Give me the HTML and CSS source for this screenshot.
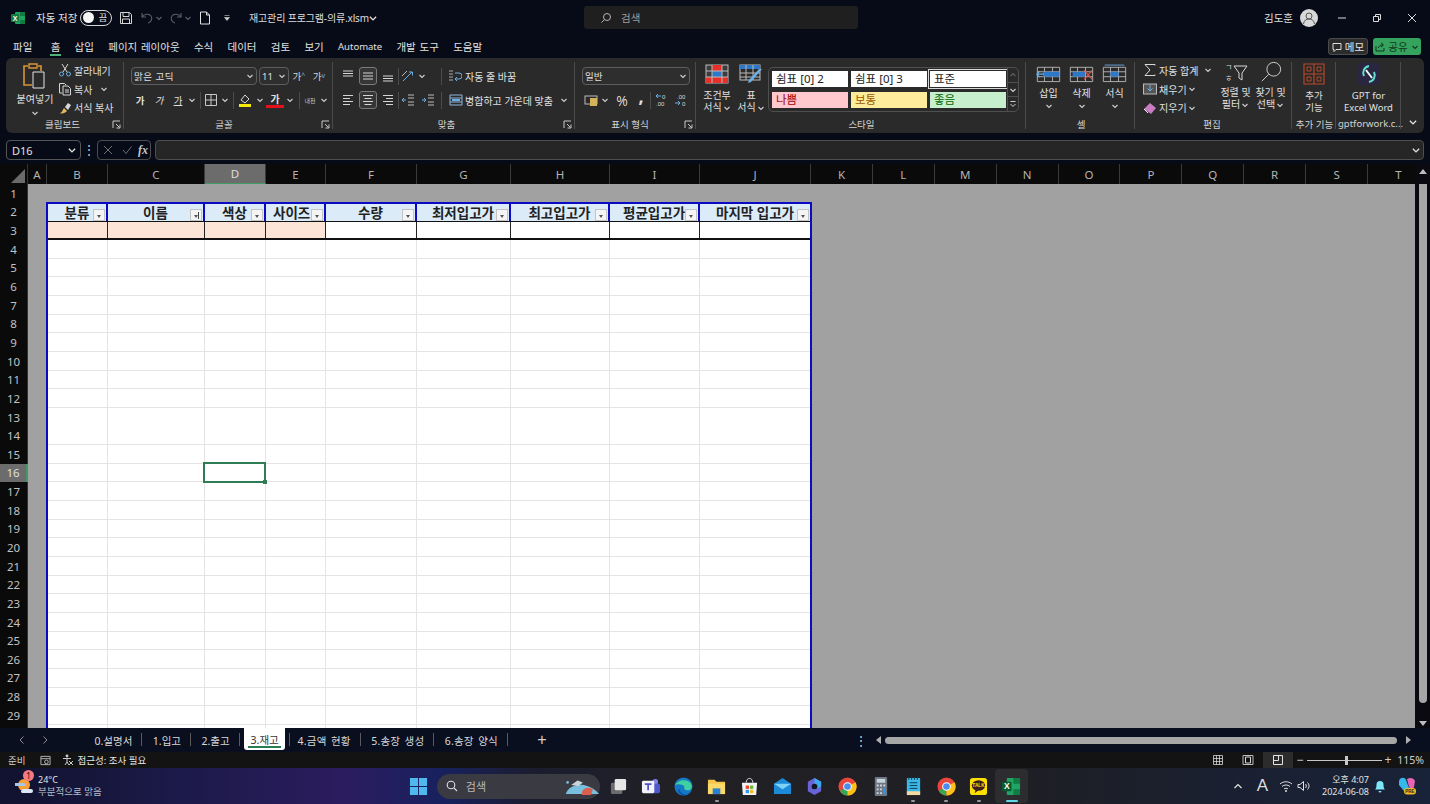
FILE: index.html
```html
<!DOCTYPE html>
<html lang="ko">
<head>
<meta charset="utf-8">
<title>재고관리 프로그램-의류.xlsm</title>
<link rel="stylesheet" href="styles.css">
</head>
<body>
<svg class="defs" aria-hidden="true">
  <symbol id="chev" viewBox="0 0 8 8"><path d="M1.500 3 4 5.500 6.500 3" fill="none" stroke="currentColor" stroke-width="1.100"/></symbol>
  <symbol id="launch" viewBox="0 0 9 9"><path d="M1 8V1h7M4 4l3.500 3.500M8 4.500V8H4.500" fill="none" stroke="#c8c8c8" stroke-width="1"/></symbol>
  <symbol id="atop" viewBox="0 0 16 16"><path d="M3 3h10M3 5.500h10M3 8h10" stroke="currentColor" fill="none"/></symbol>
  <symbol id="amid" viewBox="0 0 16 16"><path d="M3 5h10M3 8h10M3 11h10" stroke="currentColor" fill="none"/></symbol>
  <symbol id="abot" viewBox="0 0 16 16"><path d="M3 8h10M3 10.500h10M3 13h10" stroke="currentColor" fill="none"/></symbol>
  <symbol id="aleft" viewBox="0 0 16 16"><path d="M3 3.500h10M3 6.500h7M3 9.500h10M3 12.500h7" stroke="currentColor" fill="none"/></symbol>
  <symbol id="acen" viewBox="0 0 16 16"><path d="M3 3.500h10M4.500 6.500h7M3 9.500h10M4.500 12.500h7" stroke="currentColor" fill="none"/></symbol>
  <symbol id="aright" viewBox="0 0 16 16"><path d="M3 3.500h10M6 6.500h7M3 9.500h10M6 12.500h7" stroke="currentColor" fill="none"/></symbol>
  <symbol id="sgrid" viewBox="0 0 28 22"><path d="M1.500 3.500h25v16h-25zM1.500 8.500h25M1.500 14h25M9.500 3.500v16M18.500 3.500v16" fill="none" stroke="#b9b9b9"/></symbol>
  <symbol id="chrome" viewBox="0 0 20 20"><circle cx="10" cy="10" r="9.500" fill="#e8453c"/><path d="M10 10 2 14.500A9.500 9.500 0 0 0 10 19.500z" fill="#34a853"/><path d="M10 10 18.500 5.500A9.500 9.500 0 0 1 10 19.500z" fill="#fbc116"/><circle cx="10" cy="10" r="4.600" fill="#fff"/><circle cx="10" cy="10" r="3.500" fill="#4a8cf0"/></symbol>
</svg>

<header class="titlebar">
  <svg class="xl" viewBox="0 0 14 14"><rect x="4" y="1" width="10" height="12" rx="1" fill="#21a366"/><path d="M9 1h5v4H9zM9 9h5v4H9z" fill="#107c41"/><rect y="3" width="8" height="8" rx="1" fill="#107c41"/><text x="4" y="9.500" class="xl-t">X</text></svg>
  <span class="autosave">자동 저장</span>
  <span class="toggle"><i class="knob"></i><span>끔</span></span>
  <svg class="qa save" viewBox="0 0 14 14"><path d="M1.500 1.500h9l2 2v9h-11zM4 1.500v4h6v-4M3.500 12.500V8h7v4.500" fill="none" stroke="#d5d5d5"/></svg>
  <svg class="qa undo" viewBox="0 0 14 14"><path d="M2 2v4h4M2 6c2-3 7-4 9-1s0 6-3 7" fill="none" stroke="#5d5f66" stroke-width="1.100"/></svg>
  <svg class="tiny dim" viewBox="0 0 8 8"><use href="#chev"/></svg>
  <svg class="qa redo" viewBox="0 0 14 14"><path d="M12 2v4H8M12 6c-2-3-7-4-9-1s0 6 3 7" fill="none" stroke="#5d5f66" stroke-width="1.100"/></svg>
  <svg class="tiny dim" viewBox="0 0 8 8"><use href="#chev"/></svg>
  <svg class="qa newdoc" viewBox="0 0 14 14"><path d="M2.500 1h6l3 3v9h-9zM8.500 1v3h3" fill="none" stroke="#e2e2e2"/></svg>
  <svg class="qatm" viewBox="0 0 8 8"><path d="M1.500 1.500h5M1.500 3.500h5L4 6.500z" fill="#d0d0d0" stroke="#d0d0d0" stroke-width=".6"/></svg>
  <span class="docname">재고관리 프로그램-의류.xlsm</span>
  <svg class="tiny lite" viewBox="0 0 8 8"><use href="#chev"/></svg>
  <div class="searchbox">
    <svg viewBox="0 0 12 12"><circle cx="7" cy="5" r="3.500" fill="none" stroke="#b5b5b5"/><path d="M4.500 7.500 1.500 10.500" stroke="#b5b5b5"/></svg>
    <span>검색</span>
  </div>
  <div class="userarea">
    <span class="username">김도훈</span>
    <svg class="avatar" viewBox="0 0 18 18"><circle cx="9" cy="9" r="9" fill="#d8d8d8"/><circle cx="9" cy="7" r="3" fill="none" stroke="#555"/><path d="M3.500 15c.5-3.500 2.500-5 5.500-5s5 1.500 5.500 5" fill="none" stroke="#555"/></svg>
  </div>
  <div class="winctl">
    <svg viewBox="0 0 10 10"><path d="M1 5h8" stroke="#ddd"/></svg>
    <svg viewBox="0 0 10 10"><path d="M1.500 3.500h5v5h-5zM3.500 3.500v-2h5v5h-2" fill="none" stroke="#ddd"/></svg>
    <svg viewBox="0 0 10 10"><path d="M1 1l8 8M9 1l-8 8" stroke="#ddd"/></svg>
  </div>
</header>

<nav class="menutabs">
  <span>파일</span><span class="on">홈</span><span>삽입</span><span>페이지 레이아웃</span><span>수식</span><span>데이터</span><span>검토</span><span>보기</span><span class="latin">Automate</span><span>개발 도구</span><span>도움말</span>
  <div class="menu-actions">
    <span class="memo"><svg viewBox="0 0 10 10"><path d="M1 1.500h8v6H4L2 9.500v-2H1z" fill="none" stroke="#ddd"/></svg>메모</span>
    <span class="share"><svg viewBox="0 0 10 10"><path d="M1 4v5h8V6M3.500 6c0-2 2-3 4-3M6 .8 8.500 3 6 5" fill="none" stroke="#10361f"/></svg>공유<svg class="tiny" viewBox="0 0 8 8"><use href="#chev"/></svg></span>
  </div>
</nav>

<section class="ribbon">
  <div class="grp g-clip">
    <div class="gbody">
      <div class="big paste">
        <svg class="bigicon" viewBox="0 0 26 28"><path d="M3 4h3M16 4h3v5M3 4h-1v19h8" fill="none" stroke="#d9953a" stroke-width="1.600"/><path d="M7 2h8v4H7z" fill="none" stroke="#d9953a" stroke-width="1.400"/><path d="M11 10h11v16H11z" fill="#2a2a2a" stroke="#e4e4e4"/></svg>
        <span>붙여넣기</span>
        <svg class="tiny" viewBox="0 0 8 8"><use href="#chev"/></svg>
      </div>
      <div class="stack">
        <div class="sm"><svg class="si" viewBox="0 0 14 14"><path d="M4 1l5 8M10 1 5 9" stroke="#d8d8d8" fill="none"/><circle cx="3.500" cy="11" r="2" fill="none" stroke="#6ab0e8"/><circle cx="10.500" cy="11" r="2" fill="none" stroke="#6ab0e8"/></svg><span>잘라내기</span></div>
        <div class="sm"><svg class="si" viewBox="0 0 14 14"><path d="M4 11H1.500V1.500h5L8 3" fill="none" stroke="#d8d8d8"/><path d="M5 4h5l2.500 2.500v6.500H5zM7 8h4M7 10h4" fill="none" stroke="#d8d8d8"/></svg><span>복사</span><svg class="tiny sp" viewBox="0 0 8 8"><use href="#chev"/></svg></div>
        <div class="sm"><svg class="si" viewBox="0 0 14 14"><path d="M1 12c3 0 3-2 5-5l3 3c-2 2-4 3-8 2z" fill="#e0b75c"/><path d="M7 6l3-4 3 2-3 5z" fill="#d8d8d8"/></svg><span>서식 복사</span></div>
      </div>
    </div>
    <div class="glabel"><span></span><span>클립보드</span><svg class="launch" viewBox="0 0 9 9"><use href="#launch"/></svg></div>
  </div>

  <div class="grp g-font">
    <div class="gbody col">
      <div class="row">
        <div class="combo fontname"><span>맑은 고딕</span><svg class="tiny" viewBox="0 0 8 8"><use href="#chev"/></svg></div>
        <div class="combo fontsize"><span>11</span><svg class="tiny" viewBox="0 0 8 8"><use href="#chev"/></svg></div>
        <span class="tb w20 t-grow">가<sup>^</sup></span>
        <span class="tb w20 t-grow">가<sup>v</sup></span>
      </div>
      <div class="row">
        <span class="tb w18 bold">가</span><span class="tb w20 ital">가</span><span class="tb w18 under">가</span>
        <span class="tb w10"><svg class="tiny" viewBox="0 0 8 8"><use href="#chev"/></svg></span><i class="vsep m3"></i>
        <span class="tb w16"><svg class="si" viewBox="0 0 14 14"><path d="M1.500 1.500h11v11h-11zM7 1.500v11M1.500 7h11" fill="none" stroke="#c8c8c8"/></svg></span>
        <span class="tb w12"><svg class="tiny" viewBox="0 0 8 8"><use href="#chev"/></svg></span><i class="vsep m2"></i>
        <span class="tb w18"><svg class="si" viewBox="0 0 14 14"><path d="M3 7l4-5 4 4-4 4z" fill="none" stroke="#d8d8d8"/><rect x="1" y="11" width="12" height="3" fill="#f4e90b"/></svg></span>
        <span class="tb w12"><svg class="tiny" viewBox="0 0 8 8"><use href="#chev"/></svg></span>
        <span class="tb w18 colorA">가</span>
        <span class="tb w12"><svg class="tiny" viewBox="0 0 8 8"><use href="#chev"/></svg></span><i class="vsep m3"></i>
        <span class="tb w16 phon">내천</span>
        <span class="tb w12"><svg class="tiny" viewBox="0 0 8 8"><use href="#chev"/></svg></span>
      </div>
    </div>
    <div class="glabel"><span></span><span>글꼴</span><svg class="launch" viewBox="0 0 9 9"><use href="#launch"/></svg></div>
  </div>

  <div class="grp g-align">
    <div class="gbody col">
      <div class="row">
        <span class="tb w20"><svg class="si16" viewBox="0 0 16 16"><use href="#atop"/></svg></span>
        <span class="tb w20 boxed"><svg class="si16" viewBox="0 0 16 16"><use href="#amid"/></svg></span>
        <span class="tb w20"><svg class="si16" viewBox="0 0 16 16"><use href="#abot"/></svg></span><i class="vsep"></i>
        <span class="tb w18"><svg class="si" viewBox="0 0 14 14"><path d="M2 12 11 3M8 3h3.500v3.500" fill="none" stroke="#6ab0e8"/><path d="M1 7l5-5" stroke="#bbb"/></svg></span>
        <span class="tb w10"><svg class="tiny" viewBox="0 0 8 8"><use href="#chev"/></svg></span><i class="vsep wrapgap"></i>
        <svg class="si wrapic" viewBox="0 0 14 14"><path d="M1 2h4M1 5h4M1 8h4M1 11h4" stroke="#aaa"/><path d="M7 4h4a2 2 0 0 1 0 6H7M9 8l-2 2 2 2" fill="none" stroke="#6ab0e8"/></svg>
        <span class="lbl">자동 줄 바꿈</span>
      </div>
      <div class="row">
        <span class="tb w20"><svg class="si16" viewBox="0 0 16 16"><use href="#aleft"/></svg></span>
        <span class="tb w20 boxed"><svg class="si16" viewBox="0 0 16 16"><use href="#acen"/></svg></span>
        <span class="tb w20"><svg class="si16" viewBox="0 0 16 16"><use href="#aright"/></svg></span><i class="vsep"></i>
        <span class="tb w18"><svg class="si" viewBox="0 0 14 14"><path d="M7 2h6M7 5h6M7 9h6M7 12h6" stroke="#bbb"/><path d="M5 7H1M3 5 1 7l2 2" fill="none" stroke="#6ab0e8"/></svg></span>
        <span class="tb w22"><svg class="si" viewBox="0 0 14 14"><path d="M7 2h6M7 5h6M7 9h6M7 12h6" stroke="#bbb"/><path d="M1 7h4M3 5l2 2-2 2" fill="none" stroke="#6ab0e8"/></svg></span><i class="vsep mergegap"></i>
        <svg class="si mergeic" viewBox="0 0 14 14"><path d="M1 2h12v10H1zM1 5h12M1 9h12" fill="none" stroke="#8fb6d8"/><path d="M3 7h8" stroke="#6ab0e8" stroke-width="2"/></svg>
        <span class="lbl">병합하고 가운데 맞춤</span>
        <svg class="tiny m-chev" viewBox="0 0 8 8"><use href="#chev"/></svg>
      </div>
    </div>
    <div class="glabel"><span></span><span>맞춤</span><svg class="launch" viewBox="0 0 9 9"><use href="#launch"/></svg></div>
  </div>

  <div class="grp g-num">
    <div class="gbody col">
      <div class="row"><div class="combo numfmt"><span>일반</span><svg class="tiny" viewBox="0 0 8 8"><use href="#chev"/></svg></div></div>
      <div class="row">
        <span class="tb w18"><svg class="si" viewBox="0 0 14 14"><rect x="1" y="3" width="12" height="8" fill="none" stroke="#bbb"/><rect x="6" y="5" width="7" height="8" fill="#d6b25a"/></svg></span>
        <span class="tb w10"><svg class="tiny" viewBox="0 0 8 8"><use href="#chev"/></svg></span>
        <span class="tb w24 pct">%</span>
        <span class="tb w14 comma">,</span><i class="vsep m4"></i>
        <span class="tb w20"><svg class="si" viewBox="0 0 14 14"><path d="M6 3H1M3 1 1 3l2 2" fill="none" stroke="#6ab0e8"/><text x="7" y="6" class="dec">0</text><text x="1" y="13" class="dec">.00</text></svg></span>
        <span class="tb w18"><svg class="si" viewBox="0 0 14 14"><text x="3" y="6" class="dec">.00</text><path d="M1 10h5M4 8l2 2-2 2" fill="none" stroke="#6ab0e8"/><text x="8" y="13" class="dec">0</text></svg></span>
      </div>
    </div>
    <div class="glabel"><span></span><span>표시 형식</span><svg class="launch" viewBox="0 0 9 9"><use href="#launch"/></svg></div>
  </div>

  <div class="grp g-style">
    <div class="gbody">
      <div class="big w34">
        <svg class="bigicon" viewBox="0 0 24 20"><rect x="1" y="1" width="22" height="18" fill="#3c3c3c" stroke="#bbb"/><path d="M7 1h10v6H7zM1 13h22v6H1z" fill="#e8302a"/><rect x="7" y="7" width="10" height="6" fill="#2d78c8"/><path d="M7 1v18M17 1v18M1 7h22M1 13h22" stroke="#bbb"/></svg>
        <span>조건부</span><span>서식<svg class="tiny inl" viewBox="0 0 8 8"><use href="#chev"/></svg></span>
      </div>
      <div class="big w34">
        <svg class="bigicon" viewBox="0 0 24 20"><rect x="1" y="1" width="20" height="15" fill="none" stroke="#bbb"/><rect x="1" y="1" width="20" height="4" fill="#2d78c8"/><path d="M7 1v15M14 1v15M1 9h20M1 13h20" stroke="#bbb"/><path d="M23 5 12 18l-3 1 1-3L20 5z" fill="#6ab0e8"/></svg>
        <span>표</span><span>서식<svg class="tiny inl" viewBox="0 0 8 8"><use href="#chev"/></svg></span>
      </div>
      <div class="gallery">
        <div class="gcells">
          <span class="gc">쉼표 [0] 2</span><span class="gc">쉼표 [0] 3</span><span class="gc sel">표준</span>
          <span class="gc bad">나쁨</span><span class="gc neu">보통</span><span class="gc good">좋음</span>
        </div>
        <div class="gscroll">
          <span><svg class="tiny flip dim" viewBox="0 0 8 8"><use href="#chev"/></svg></span>
          <span><svg class="tiny" viewBox="0 0 8 8"><use href="#chev"/></svg></span>
          <span><svg class="tiny" viewBox="0 0 8 8"><path d="M1.500 1.500h5M1.500 4 4 6.500 6.500 4" fill="none" stroke="currentColor"/></svg></span>
        </div>
      </div>
    </div>
    <div class="glabel"><span></span><span>스타일</span><span></span></div>
  </div>

  <div class="grp g-cell">
    <div class="gbody">
      <div class="big w33"><svg class="cellic" viewBox="0 0 28 22"><use href="#sgrid"/><path d="M8 8.500h18V14H8z" fill="#2d78c8"/><path d="M9 11.200H1M4 8 1 11.200l3 3.200" fill="none" stroke="#6ab0e8" stroke-width="1.300"/></svg><span>삽입</span><svg class="tiny" viewBox="0 0 8 8"><use href="#chev"/></svg></div>
      <div class="big w33"><svg class="cellic" viewBox="0 0 28 22"><use href="#sgrid"/><path d="M4 8.500h14V14H4z" fill="#2d78c8"/><path d="M17 7l9 10M26 7l-9 10" stroke="#e8534a" stroke-width="1.300"/></svg><span>삭제</span><svg class="tiny" viewBox="0 0 8 8"><use href="#chev"/></svg></div>
      <div class="big w33"><svg class="cellic" viewBox="0 0 28 22"><use href="#sgrid"/><path d="M9.500 8.500h9V14h-9z" fill="#2d78c8"/><path d="M3 1h22" stroke="#6ab0e8"/></svg><span>서식</span><svg class="tiny" viewBox="0 0 8 8"><use href="#chev"/></svg></div>
    </div>
    <div class="glabel"><span></span><span>셀</span><span></span></div>
  </div>

  <div class="grp g-edit">
    <div class="gbody">
      <div class="stack w76">
        <div class="sm"><svg class="si" viewBox="0 0 14 14"><path d="M12 2.500V1.500H2L7 7l-5 5.500h10v-1" fill="none" stroke="#d8d8d8"/></svg><span>자동 합계</span><svg class="tiny sp2" viewBox="0 0 8 8"><use href="#chev"/></svg></div>
        <div class="sm"><svg class="si" viewBox="0 0 14 14"><rect x=".5" y="2" width="13" height="10" fill="#555" stroke="#bbb"/><path d="M7 3v6M4.500 6.500 7 9l2.500-2.500" fill="none" stroke="#6ab0e8"/></svg><span>채우기</span><svg class="tiny" viewBox="0 0 8 8"><use href="#chev"/></svg></div>
        <div class="sm"><svg class="si" viewBox="0 0 14 14"><path d="M1 8 7 2l6 5-5 6z" fill="#c77cc4"/><path d="M1 8l4 4" stroke="#eee"/></svg><span>지우기</span><svg class="tiny" viewBox="0 0 8 8"><use href="#chev"/></svg></div>
      </div>
      <div class="big w35"><svg class="bigicon" viewBox="0 0 24 22"><text x="1" y="9" class="sortt">ㄱ</text><text x="1" y="20" class="sortt">ㅎ</text><path d="M10 5h13l-5 7v7l-3-2v-5z" fill="none" stroke="#d8d8d8"/></svg><span>정렬 및</span><span>필터<svg class="tiny inl" viewBox="0 0 8 8"><use href="#chev"/></svg></span></div>
      <div class="big w35"><svg class="bigicon" viewBox="0 0 24 24"><circle cx="15" cy="9" r="7.500" fill="none" stroke="#d8d8d8"/><path d="M9.500 14.500 2 22" stroke="#d8d8d8"/></svg><span>찾기 및</span><span>선택<svg class="tiny inl" viewBox="0 0 8 8"><use href="#chev"/></svg></span></div>
    </div>
    <div class="glabel"><span></span><span>편집</span><span></span></div>
  </div>

  <div class="grp g-add">
    <div class="gbody">
      <div class="big full"><svg class="bigicon" viewBox="0 0 22 22"><path d="M1 1h20v20H1zM11 1v20M1 11h20" fill="none" stroke="#b5482a" stroke-width="1.200"/><path d="M4 4h4v4H4zM14 4h4v4h-4zM4 14h4v4H4zM14 14h4v4h-4z" fill="none" stroke="#b5482a"/></svg><span>추가</span><span>기능</span></div>
    </div>
    <div class="glabel"><span></span><span>추가 기능</span><span></span></div>
  </div>

  <div class="grp g-gpt">
    <div class="gbody">
      <div class="big full"><svg class="bigicon" viewBox="0 0 22 22"><rect width="22" height="22" rx="4" fill="#2a2540"/><path d="M11 3c-5 1-7 6-5 10M11 19c5-1 7-6 5-10" fill="none" stroke="#5fe0cf" stroke-width="2"/><path d="M8 7c2 3 4 5 6 8" stroke="#e8f6f6" stroke-width="2" fill="none"/></svg><span>GPT for</span><span>Excel Word</span></div>
    </div>
    <div class="glabel"><span></span><span>gptforwork.c...</span><span></span></div>
  </div>

  <div class="ribbon-end"><svg class="collapse" viewBox="0 0 8 8"><use href="#chev"/></svg></div>
</section>

<section class="formulabar">
  <div class="namebox"><span>D16</span><svg class="tiny lite" viewBox="0 0 8 8"><use href="#chev"/></svg></div>
  <span class="vdots">⋮</span>
  <div class="fxbox">
    <svg viewBox="0 0 10 10"><path d="M1 1l8 8M9 1 1 9" stroke="#6f6f6f"/></svg>
    <svg viewBox="0 0 10 10"><path d="M1 5l3 3.500L9.500 1.500" fill="none" stroke="#6f6f6f"/></svg>
    <span>fx</span>
  </div>
  <div class="fxinput"><svg class="tiny lite" viewBox="0 0 8 8"><use href="#chev"/></svg></div>
</section>

<section class="colhead">
  <div class="cols">
    <span class="corner"><svg viewBox="0 0 14 14"><path d="M14 0v14H0z" fill="#6a6a6a"/></svg></span>
    <span class="ch c-a">A</span><span class="ch c-b">B</span><span class="ch c-c">C</span><span class="ch c-d active">D</span><span class="ch c-e">E</span><span class="ch c-f">F</span><span class="ch c-g">G</span><span class="ch c-h">H</span><span class="ch c-i">I</span><span class="ch c-j">J</span><span class="ch c-k">K</span><span class="ch c-k">L</span><span class="ch c-k">M</span><span class="ch c-k">N</span><span class="ch c-k">O</span><span class="ch c-k">P</span><span class="ch c-k">Q</span><span class="ch c-k">R</span><span class="ch c-k">S</span><span class="ch c-k">T</span>
  </div>
  <div class="arrowcell"><i class="tri up"></i></div>
</section>

<section class="sheet">
  <div class="rowhead">
    <span>1</span><span>2</span><span>3</span><span>4</span><span>5</span><span>6</span><span>7</span><span>8</span><span>9</span><span>10</span><span>11</span><span>12</span><span>13</span><span>14</span><span>15</span><span class="active">16</span><span>17</span><span>18</span><span>19</span><span>20</span><span>21</span><span>22</span><span>23</span><span>24</span><span>25</span><span>26</span><span>27</span><span>28</span><span>29</span>
  </div>
  <div class="canvas">
    <div class="dtable">
      <div class="dhead">
        <div class="dh c-1">분류<i class="fb"></i></div>
        <div class="dh c-2">이름<i class="fb sorted"></i></div>
        <div class="dh c-3">색상<i class="fb"></i></div>
        <div class="dh c-4 tight">사이즈<i class="fb"></i></div>
        <div class="dh c-5">수량<i class="fb"></i></div>
        <div class="dh c-6">최저입고가<i class="fb"></i></div>
        <div class="dh c-7">최고입고가<i class="fb"></i></div>
        <div class="dh c-8 tight">평균입고가<i class="fb"></i></div>
        <div class="dh c-9">마지막 입고가<i class="fb"></i></div>
      </div>
      <div class="drow">
        <div class="dc c-1 peach"></div><div class="dc c-2 peach"></div><div class="dc c-3 peach"></div><div class="dc c-4 peach"></div><div class="dc c-5"></div><div class="dc c-6"></div><div class="dc c-7"></div><div class="dc c-8"></div><div class="dc c-9"></div>
      </div>
      <div class="dbody">
        <div class="bc c-1"></div><div class="bc c-2"></div><div class="bc c-3"></div><div class="bc c-4"></div><div class="bc c-5"></div><div class="bc c-6"></div><div class="bc c-7"></div><div class="bc c-8"></div><div class="bc c-9"></div>
      </div>
    </div>
    <div class="selection"><i></i></div>
  </div>
  <div class="vscroll"><i class="thumb"></i><i class="tri down"></i></div>
</section>

<section class="tabbar">
  <div class="tabnav"><svg viewBox="0 0 8 10"><path d="M5.500 1.500 2 5l3.500 3.500" fill="none" stroke="#8d8d8d"/></svg><svg viewBox="0 0 8 10"><path d="M2.500 1.500 6 5 2.500 8.500" fill="none" stroke="#8d8d8d"/></svg></div>
  <div class="tabs">
    <span class="tab">0.설명서</span><span class="tab">1.입고</span><span class="tab">2.출고</span><span class="tab current">3.재고</span><span class="tab after">4.금액 현황</span><span class="tab">5.송장 생성</span><span class="tab">6.송장 양식</span>
  </div>
  <span class="addtab">+</span>
  <span class="tabdots">⋮</span>
  <i class="tri left"></i>
  <div class="hscroll"></div>
  <i class="tri right"></i>
</section>

<footer class="statusbar">
  <span>준비</span>
  <svg class="st-macro" viewBox="0 0 12 12"><path d="M1 1.500h10v9H1zM1 4h10" fill="none" stroke="#bbb"/><circle cx="7" cy="7.500" r="2" fill="none" stroke="#bbb"/></svg>
  <svg class="st-acc" viewBox="0 0 12 12"><circle cx="5" cy="2" r="1.400" fill="#ccc"/><path d="M1 4.500h8M5 5v3M5 8l-2 3M5 8l2 3M7 7l4 4M11 7l-4 4" stroke="#ccc" fill="none"/></svg>
  <span class="st-text">접근성: 조사 필요</span>
  <div class="st-right">
    <span class="vb"><svg viewBox="0 0 12 12"><path d="M1.500 1.500h9v9h-9zM4.500 1.500v9M7.500 1.500v9M1.500 4.500h9M1.500 7.500h9" fill="none" stroke="#d8d8d8" stroke-width=".8"/></svg></span>
    <span class="vb"><svg viewBox="0 0 12 12"><path d="M1 1.500h10v9H1z" fill="none" stroke="#bbb"/><path d="M3.500 3h5v6h-5z" fill="none" stroke="#d8d8d8"/></svg></span>
    <span class="vb on"><svg viewBox="0 0 12 12"><path d="M1.500 1.500h9v9h-9zM6.500 1.500v5h-5" fill="none" stroke="#e4e4e4"/></svg></span>
    <span class="zm first">−</span>
    <div class="slider"><i></i></div>
    <span class="zm">+</span>
    <span class="zoomval">115%</span>
  </div>
</footer>

<footer class="taskbar">
  <div class="weather">
    <svg class="w-ic" viewBox="0 0 22 22"><circle cx="11" cy="10" r="6" fill="#f5a03a"/><path d="M2 8h8a3 3 0 0 1 3 3H2z" fill="#a9c5ea"/><path d="M8 17a3 3 0 0 1 3-3h7a2 2 0 0 1 0 4H9z" fill="#dce7f5"/></svg>
    <i class="w-badge">1</i>
    <div class="w-text"><span>24°C</span><span class="w-sub">부분적으로 맑음</span></div>
  </div>
  <span class="tk"><svg viewBox="0 0 20 20"><path d="M1 1h8.500v8.500H1zM10.500 1H19v8.500h-8.500zM1 10.500h8.500V19H1zM10.500 10.500H19V19h-8.500z" fill="#4fb8ee"/></svg></span>
  <div class="tk-search">
    <svg viewBox="0 0 12 12"><circle cx="5" cy="5" r="3.800" fill="none" stroke="#e0e0e0" stroke-width="1.100"/><path d="M8 8l3 3" stroke="#e0e0e0" stroke-width="1.100"/></svg>
    <span>검색</span>
    <svg class="tk-art" viewBox="0 0 40 20"><path d="M2 19C4 11 14 7 22 9s13 5 17 10z" fill="#79c0de"/><path d="M20 16c2-4 8-6 12-2l-2 6H20z" fill="#d9604e"/><path d="M8 9l7-5 6 2-5 4z" fill="#c8d4da"/><circle cx="4" cy="6" r="1.500" fill="#79c0de"/></svg>
  </div>
  <span class="tk"><svg viewBox="0 0 20 20"><rect x="2" y="6" width="12" height="12" rx="1.500" fill="#6b6b6b"/><rect x="6" y="2" width="12" height="12" rx="1.500" fill="#e6e6e6"/></svg></span>
  <span class="tk"><svg viewBox="0 0 20 20"><circle cx="15" cy="5" r="3" fill="#7b83eb"/><rect x="10" y="7" width="10" height="10" rx="2" fill="#5059c9"/><rect x="1" y="4" width="13" height="13" rx="1.500" fill="#f2f2ff"/><path d="M4 7.500h7M7.500 7.500V14" stroke="#4b53bc" stroke-width="1.800"/></svg></span>
  <span class="tk"><svg viewBox="0 0 20 20"><circle cx="10" cy="10" r="9.500" fill="#1478c8"/><path d="M1 9C3 3 14 1 18 7c2 4 0 7-4 7-3 0-4-2-3-4C8 7 3 7 1 9z" fill="#3fd0a0"/><path d="M5 13c0 3 3 6 7 6" stroke="#0d4f9c" stroke-width="1.500" fill="none"/></svg></span>
  <span class="tk dot"><svg viewBox="0 0 20 20"><path d="M1 3h7l2 2h9v13H1z" fill="#f5c64a"/><rect x="1" y="7" width="18" height="11" fill="#fbd968"/><rect x="6" y="12" width="8" height="6" fill="#2a7fd0"/></svg></span>
  <span class="tk"><svg viewBox="0 0 20 20"><path d="M2 6h16l-1 13H3z" fill="#f2f2f2"/><path d="M6.500 6c0-6 7-6 7 0" fill="none" stroke="#e0e0e0"/><path d="M6 9h3.500v3.500H6z" fill="#e8472d"/><path d="M10.500 9H14v3.500h-3.500z" fill="#6ab83a"/><path d="M6 13.500h3.500V17H6z" fill="#2a9be8"/><path d="M10.500 13.500H14V17h-3.500z" fill="#f7b81a"/></svg></span>
  <span class="tk"><svg viewBox="0 0 20 20"><path d="M1 7 10 1l9 6v11H1z" fill="#1b8ad8"/><path d="M1 7l9 6 9-6" fill="#7ed2f7"/></svg></span>
  <span class="tk"><svg viewBox="0 0 20 20"><path d="M10 1 17 5v10l-7 4-7-4V5z" fill="#6a63d8"/><path d="M10 1l7 4v5l-7 4z" fill="#3ea8ec"/><circle cx="10" cy="10" r="3" fill="#14141c"/></svg></span>
  <span class="tk"><svg viewBox="0 0 20 20"><use href="#chrome"/></svg></span>
  <span class="tk"><svg viewBox="0 0 20 20"><rect x="4" y="0" width="13" height="20" rx="1" fill="#6d7681"/><rect x="6" y="2" width="9" height="4" fill="#c8d4dc"/><path d="M6 8h2v2H6zM9.500 8h2v2h-2zM13 8h2v2h-2zM6 12h2v2H6zM9.500 12h2v2h-2zM6 16h2v2H6zM9.500 16h2v2h-2z" fill="#d0d8de"/><rect x="13" y="12" width="2" height="6" fill="#3a97e8"/></svg></span>
  <span class="tk dot"><svg viewBox="0 0 20 20"><rect x="3" y="1" width="14" height="18" rx="1" fill="#3ab8e8"/><rect x="3" y="15" width="14" height="4" fill="#f4d8a0"/><path d="M6 6h8M6 9h8M6 12h8M5 0v3M8 0v3M11 0v3M14 0v3" stroke="#0f3a50"/></svg></span>
  <span class="tk dot"><svg viewBox="0 0 20 20"><use href="#chrome"/></svg></span>
  <span class="tk dot"><svg viewBox="0 0 20 20"><rect x="1" y="1" width="18" height="18" rx="3" fill="#fae100"/><ellipse cx="10" cy="9" rx="7" ry="5.500" fill="#3c1e1e"/><path d="M7 13l-1 4 4-3z" fill="#3c1e1e"/><text x="10" y="10.500" class="talk">TALK</text></svg></span>
  <span class="tk activeapp"><svg viewBox="0 0 20 20"><rect x="5" y="1" width="14" height="18" rx="1" fill="#21a366"/><path d="M12 1h7v6h-7zM12 13h7v6h-7z" fill="#107c41"/><rect x="0" y="5" width="10" height="10" rx="1" fill="#0b5a2e"/><text x="5" y="13" class="xl-t big-x">X</text></svg></span>
  <div class="tray">
    <svg class="tr-chev" viewBox="0 0 10 10"><path d="M1.500 7 5 3.500 8.500 7" fill="none" stroke="#e6e6e6" stroke-width="1.200"/></svg>
    <span class="tr-a">A</span>
    <svg class="tr-wifi" viewBox="0 0 14 12"><path d="M1 4c3.500-3 8.500-3 12 0M3 6.500c2.500-2 5.500-2 8 0M5 9c1-1 3-1 4 0" fill="none" stroke="#e0e0e0"/><circle cx="7" cy="11" r="1" fill="#e0e0e0"/></svg>
    <svg class="tr-vol" viewBox="0 0 14 12"><path d="M1 4.500h2L6.500 1.500v9L3 7.500H1z" fill="none" stroke="#e0e0e0"/><path d="M8.500 4c1 1 1 3 0 4M10.500 2.500c2 2 2 5 0 7" fill="none" stroke="#e0e0e0"/></svg>
    <div class="clock"><span>오후 4:07</span><span>2024-06-08</span></div>
    <svg class="tr-bell" viewBox="0 0 12 14"><path d="M1 10.500c1.200-1 1.500-2.500 1.500-5a3.500 3.500 0 0 1 7 0c0 2.500.3 4 1.500 5z" fill="#7de6f6"/><path d="M4.500 12h3a1.500 1.500 0 0 1-3 0z" fill="#7de6f6"/></svg>
    <svg class="tr-cop" viewBox="0 0 20 20"><path d="M2 5C3 1 8 1 9 4l3 8c1 3-3 5-5 3L2 9z" fill="#38b7ea"/><path d="M10 3c3-2 7-1 8 2l-1 6c-1 2-4 2-5 0z" fill="#e864b4"/><rect x="7" y="12" width="12" height="6.500" rx="3" fill="#f4b81f"/><text x="13" y="17.300" class="pro">PRE</text></svg>
  </div>
</footer>
</body>
</html>
```

FILE: styles.css
```css
* { box-sizing: border-box; }
html, body { margin: 0; padding: 0; }
body {
  width: 1430px; height: 804px; overflow: hidden;
  display: flex; flex-direction: column;
  background: #070b17; color: #dcdcdc;
  font-family: "Noto Sans", "Noto Sans CJK KR", sans-serif;
  font-size: 10px;
}
.defs { width: 0; height: 0; position: absolute; }
svg { display: block; flex: none; }
i { font-style: normal; display: block; }
.tiny { width: 8px; height: 8px; color: #d0d0d0; }
.tiny.inl { display: inline-block; vertical-align: -1px; margin-left: 1px; }
.tiny.dim { color: #5d5f66; }
.tiny.lite { color: #e0e0e0; width: 10px; height: 10px; }
.tiny.flip { transform: rotate(180deg); }
.si { width: 14px; height: 14px; }
.si16 { width: 16px; height: 16px; color: #d4d4d4; }

/* title bar */
.titlebar { height: 35px; flex: none; display: flex; align-items: center; padding-left: 11px; }
.xl { width: 14px; height: 14px; }
.xl-t { font: bold 7px "Liberation Sans", sans-serif; fill: #fff; text-anchor: middle; }
.autosave { margin-left: 11px; font-size: 10.5px; color: #e0e0e0; width: 44px; white-space: nowrap; }
.toggle {
  width: 32px; height: 16px; border: 1px solid #d8d8d8; border-radius: 8px;
  display: flex; align-items: center; justify-content: space-between; padding: 0 4px 0 2px;
  font-size: 9px; color: #e4e4e4; margin-right: 7px;
}
.knob { width: 11px; height: 11px; border-radius: 50%; background: #f4f4f4; }
.qa { width: 14px; height: 14px; }
.save { margin-right: 7px; }
.undo, .redo { margin-right: 1px; }
.titlebar .tiny.dim { margin-right: 6px; }
.newdoc { margin-right: 11px; }
.qatm { width: 8px; height: 8px; margin-right: 18px; }
.docname { font-size: 10px; color: #dedede; width: 119px; white-space: nowrap; letter-spacing: -.15px; }
.searchbox {
  position: absolute; left: 584px; top: 6px; width: 274px; height: 23px;
  background: #1f1f20; border-radius: 3px; display: flex; align-items: center; padding-left: 16px; gap: 9px;
  color: #9d9d9d; font-size: 10.500px;
}
.searchbox svg { width: 12px; height: 12px; }
.userarea { margin-left: auto; display: flex; align-items: center; gap: 7px; margin-right: 19px; }
.username { font-size: 10.500px; color: #e0e0e0; }
.avatar { width: 18px; height: 18px; }
.winctl { display: flex; gap: 25px; margin-right: 13px; }
.winctl svg { width: 10px; height: 10px; }

/* menu */
.menutabs { height: 23px; flex: none; display: flex; align-items: center; gap: 14.300px; padding-left: 13px; font-size: 10.500px; color: #e2e2e2; }
.menutabs > span { white-space: nowrap; position: relative; word-spacing: 1px; }
.menutabs .on { margin-left: 4px; }
.menutabs .latin { font-size: 9.500px; }
.menutabs .on::after { content: ""; position: absolute; left: -1px; right: -1px; bottom: -2px; height: 2px; background: #4fb477; }
.menu-actions { margin-left: auto; margin-right: 9px; display: flex; gap: 5px; }
.memo, .share { height: 17px; border-radius: 3px; display: flex; align-items: center; justify-content: center; gap: 3px; font-size: 10.5px; }
.memo { width: 40px; background: #2c2c2c; border: 1px solid #4b4b4b; color: #e6e6e6; }
.memo svg, .share > svg:first-child { width: 10px; height: 10px; }
.share { width: 48px; background: #35a35d; color: #0f3a20; }
.share .tiny { color: #0f3a20; }

/* ribbon */
.ribbon { height: 75px; flex: none; margin: 0 6px; background: #2a2a2a; border-radius: 6px; display: flex; }
.grp { display: flex; flex-direction: column; flex: none; position: relative; }
.grp::after { content: ""; position: absolute; right: 0; top: 4px; bottom: 4px; width: 1px; background: #4b4b4b; }
.g-clip { width: 118px; } .g-font { width: 209px; } .g-align { width: 242px; } .g-num { width: 121px; }
.g-style { width: 330px; } .g-cell { width: 109px; } .g-edit { width: 157px; } .g-add { width: 44px; } .g-gpt { width: 65px; }
.gbody { flex: 1; min-height: 0; display: flex; font-size: 10px; color: #e0e0e0; }
.gbody.col { flex-direction: column; gap: 6px; padding-top: 9px; }
.glabel { height: 16px; flex: none; display: grid; grid-template-columns: 1fr auto 1fr; align-items: center; padding: 0 1px 3px 2px; font-size: 9.500px; color: #d4d4d4; white-space: nowrap; }
.g-clip .glabel span:nth-child(2) { margin-right: 6px; }
.g-font .glabel span:nth-child(2) { margin-right: 10px; }
.g-align .glabel span:nth-child(2) { margin-right: 16px; }
.g-num .glabel span:nth-child(2) { margin-right: 12px; }
.g-edit .glabel span:nth-child(2) { margin-right: 4px; }
.launch { width: 9px; height: 9px; justify-self: end; margin-right: 2px; }
.row { display: flex; align-items: center; height: 18px; }
.g-font .gbody { padding-left: 7px; }
.g-align .gbody { padding-left: 5px; }
.g-num .gbody { padding-left: 7px; }
.g-style .gbody { padding: 4px 0 0 4px; }
.g-cell .gbody { padding: 6px 0 0 6px; }
.g-edit .gbody { padding-left: 7px; }

.big { display: flex; flex-direction: column; align-items: center; line-height: 11.500px; white-space: nowrap; flex: none; }
.bigicon { width: 24px; height: 22px; margin: 3px 0 4px; }
.paste { width: 38px; margin-left: 10px; padding-top: 2px; }
.paste .bigicon { width: 26px; height: 28px; margin: 2px 0 4px; }
.paste .tiny { margin-top: 3px; }
.w33 { width: 33px; } .w34 { width: 34px; } .w35 { width: 35px; } .full { width: 100%; }
.w33 span { margin-top: 4px; }
.w33 .tiny { margin-top: 2px; }
.cellic { width: 25px; height: 20px; }
.stack { display: flex; flex-direction: column; margin-left: 3px; padding-top: 3px; }
.stack.w76 { width: 76px; margin-left: 0; }
.sm { height: 19px; display: flex; align-items: center; gap: 1px; white-space: nowrap; padding-left: 1px; }
.sm .si { margin-right: 1px; }
.sp { margin-left: 7px; }
.sp2 { margin-left: 5px; }
.tb { display: inline-flex; align-items: center; justify-content: center; height: 18px; flex: none; position: relative; }
.w10 { width: 10px; } .w12 { width: 12px; } .w14 { width: 14px; } .w16 { width: 16px; } .w18 { width: 18px; } .w20 { width: 20px; } .w22 { width: 22px; } .w24 { width: 24px; }
.vsep { width: 1px; height: 17px; background: #4b4b4b; flex: none; }
.m2 { margin: 0 2px; } .m3 { margin: 0 2px 0 3px; } .m4 { margin: 0 1px 0 2px; }
.wrapgap { margin: 0 6px 0 14px; } .mergegap { margin: 0 7px 0 2px; }
.wrapic { margin-right: 3px; }
.mergeic { margin-right: 2px; }
.lbl { white-space: nowrap; }
.m-chev { margin-left: 7px; }
.boxed { height: 18px; width: 18px; margin: 0 1px; border: 1px solid #7a7a7a; border-radius: 3px; background: #363636; }
.combo { height: 18px; border: 1px solid #5e5e5e; border-radius: 4px; display: flex; align-items: center; justify-content: space-between; padding: 0 2px; background: #2e2e2e; flex: none; font-size: 9.500px; }
.fontname { width: 126px; margin-right: 2px; letter-spacing: .5px; }
.fontsize { width: 30px; margin-right: 0; }
.numfmt { width: 108px; margin-left: 0; }
.t-grow { color: #d8d8d8; font-size: 9.500px; }
.t-grow sup { font-size: 7px; color: #6ab0e8; line-height: 0; }
.bold { font-weight: bold; font-size: 9.500px; }
.ital { font-style: italic; font-size: 9.500px; }
.under { text-decoration: underline; font-size: 9.500px; }
.colorA { font-weight: bold; font-size: 10px; border-bottom: 3px solid #e8101a; height: 14px; line-height: 11px; margin-top: 1px; }
.phon { font-size: 6px; color: #c8c8c8; }
.pct { font-size: 14px; color: #dcdcdc; font-family: "Open Sans", sans-serif; }
.comma { font-size: 18px; font-weight: bold; line-height: 10px; padding-bottom: 9px; }
.dec { font: 6px "Liberation Sans", sans-serif; fill: #d8d8d8; }
.sortt { font: 8px "Noto Sans CJK KR", sans-serif; fill: #d8d8d8; }
.gallery { width: 251px; height: 45px; border: 1px solid #4f4f4f; border-radius: 5px; display: flex; margin-top: 5px; }
.gcells { display: grid; grid-template-columns: 76px 76px 76px; column-gap: 3px; row-gap: 5px; padding: 3px 0 0 3px; width: 238px; grid-auto-rows: 16px; }
.gc { background: #fff; color: #222; font-size: 11.500px; line-height: 16px; padding-left: 4px; white-space: nowrap; }
.gc.sel { outline: 1px solid #d8d8d8; outline-offset: 1px; }
.gc.bad { background: #ffc7ce; color: #9c0006; }
.gc.neu { background: #ffeb9c; color: #9c5700; }
.gc.good { background: #c6efce; color: #006100; }
.gscroll { width: 11px; margin-left: auto; display: flex; flex-direction: column; border-left: 1px solid #4f4f4f; }
.gscroll span { flex: 1; display: flex; align-items: center; justify-content: center; border-bottom: 1px solid #4f4f4f; }
.gscroll span:last-child { border-bottom: 0; }
.ribbon-end { flex: 1; display: flex; align-items: flex-end; justify-content: center; padding-bottom: 6px; }
.collapse { width: 10px; height: 10px; color: #e0e0e0; }
.w34 span + span, .w35 span + span, .full span + span { margin-top: 0; }
.g-add .bigicon, .g-gpt .bigicon { width: 22px; height: 22px; margin: 5px 0 5px; }
.g-add .big, .g-gpt .big { font-size: 9.500px; }
.g-style .bigicon { margin: 1px 0 5px; }

/* formula bar */
.formulabar { height: 20px; flex: none; margin: 7px 6px 4px; display: flex; align-items: stretch; }
.namebox { width: 75px; border: 1px solid #555; border-radius: 4px; display: flex; align-items: center; justify-content: space-between; padding: 0 3px 0 5px; font-size: 11px; color: #e0e0e0; }
.vdots { width: 16px; text-align: center; color: #cfcfcf; font-size: 12px; line-height: 20px; }
.fxbox { width: 54px; border: 1px solid #4d4d4d; border-radius: 4px; display: flex; align-items: center; gap: 9px; padding-left: 5px; }
.fxbox svg { width: 10px; height: 10px; }
.fxbox span { font: italic bold 12px "Liberation Serif", serif; color: #c4c4c4; margin-left: -3px; }
.fxinput { flex: 1; margin-left: 4px; background: #262626; border: 1px solid #4d4d4d; border-radius: 4px; display: flex; align-items: center; justify-content: flex-end; padding-right: 2px; }

/* sheet headers */
.colhead { height: 20px; flex: none; display: flex; background: #0a0a0b; }
.cols { width: 1415px; display: flex; overflow: hidden; }
.corner { width: 28px; flex: none; display: flex; align-items: flex-end; padding: 0 3px 1px 11px; border-right: 1px solid #333; }
.corner svg { width: 14px; height: 14px; }
.ch { flex: none; display: flex; align-items: center; justify-content: center; font-size: 11.500px; color: #b4b4b4; border-right: 1px solid #3a3a3a; }
.c-a { width: 19px; } .c-b { width: 61px; } .c-c { width: 97px; } .c-d { width: 61px; } .c-e { width: 60px; } .c-f { width: 91px; } .c-g { width: 94px; } .c-h { width: 99px; } .c-i { width: 90px; } .c-j { width: 111px; } .c-k { width: 61.900px; }
.ch.active { background: #6c6c6c; color: #dcdcdc; border-bottom: 1px solid #3f9a66; }
.arrowcell { width: 15px; display: flex; justify-content: center; padding-top: 5px; background: #0a0a10; }
.tri { width: 0; height: 0; border-style: solid; border-color: transparent; flex: none; }
.tri.up { border-width: 0 4px 5px; border-bottom-color: #bdbdbd; }
.tri.down { border-width: 5px 4px 0; border-top-color: #bdbdbd; margin-top: auto; margin-bottom: 2px; }
.tri.left { border-width: 4px 5px 4px 0; border-right-color: #b0b0b0; margin-right: 4px; }
.tri.right { border-width: 4px 0 4px 5px; border-left-color: #b0b0b0; margin-left: 9px; }

.sheet { height: 544px; flex: none; display: flex; overflow: hidden; }
.rowhead { width: 28px; flex: none; background: #0a0a0b; display: flex; flex-direction: column; border-right: 1px solid #333; }
.rowhead span { height: 18.650px; flex: none; display: flex; align-items: center; justify-content: center; font-size: 11.500px; color: #c2c2c2; }
.rowhead .active { background: #6c6c6c; color: #e0e0e0; border-right: 2px solid #3f9a66; margin-right: -1px; }
.canvas { width: 1387px; flex: none; background: #a1a1a1; padding: 18px 0 0 18px; position: relative; overflow: hidden; }
.dtable { width: 766px; border: solid #0b0bc4; border-width: 2px 2px 0; display: flex; flex-direction: column; background: #fff; height: 540px; }
.dhead, .drow, .dbody { display: flex; flex: none; }
.dhead { height: 18px; border-bottom: 1px solid #111; }
.drow { height: 18px; border-bottom: 2px solid #111; }
.c-1 { width: 60px; } .c-2 { width: 97px; } .c-3 { width: 61px; } .c-4 { width: 60px; } .c-5 { width: 91px; } .c-6 { width: 94px; } .c-7 { width: 99px; } .c-8 { width: 90px; } .c-9 { width: 110px; }
.dh { flex: none; background: #dcebf8; display: flex; align-items: center; justify-content: center; position: relative; font-size: 13.500px; font-weight: bold; color: #222; border-right: 2px solid #0b0bc4; white-space: nowrap; overflow: hidden; line-height: 16px; }
.dh.c-9 { border-right: 0; }
.dh.tight { justify-content: flex-start; padding-left: 7px; }
.dh.c-8.tight { padding-left: 13px; }
.fb { position: absolute; right: 1px; bottom: 0; width: 12px; height: 12px; background: #f4f4f4; border: 1px solid #c4c4c4; }
.fb::after { content: ""; position: absolute; left: 3px; top: 5px; border-style: solid; border-width: 3px 2.500px 0; border-color: #555 transparent transparent; }
.fb.sorted::before { content: ""; position: absolute; right: 2px; top: 2px; width: 1px; height: 7px; background: #444; }
.dc { flex: none; border-right: 1px solid #222; background: #fff; }
.dc.peach { background: #fce4d6; }
.dc.c-9 { border-right: 0; }
.dbody { flex: 1; }
.bc { flex: none; height: 100%; border-right: 1px solid #e4e4e4; background: repeating-linear-gradient(to bottom, #fff 0, #fff 17.650px, #e4e4e4 17.650px, #e4e4e4 18.650px); }
.bc.c-9 { border-right: 0; }
.selection { position: absolute; left: 175px; top: 278px; width: 63px; height: 21px; border: 2px solid #2e7d55; }
.selection i { position: absolute; right: -3px; bottom: -3px; width: 4px; height: 4px; background: #2e7d55; border: 0; }
.vscroll { width: 15px; flex: none; background: #0a0a10; display: flex; flex-direction: column; align-items: center; }
.thumb { width: 8px; height: 524px; margin-top: -5px; background: #a6a6a6; border-radius: 4px; flex: none; }

/* sheet tabs */
.tabbar { height: 24px; flex: none; background: #0a0f20; display: flex; align-items: center; }
.tabnav { width: 80px; flex: none; display: flex; padding-left: 18px; gap: 15px; }
.tabnav svg { width: 8px; height: 10px; }
.tabs { display: flex; align-items: stretch; height: 24px; flex: none; padding-left: 4px; }
.tab { padding: 0 10px 0 10.500px; display: flex; align-items: center; font-size: 10.500px; color: #d8d8d8; white-space: nowrap; position: relative; word-spacing: 1.500px; }
.tab::after { content: ""; position: absolute; right: 0; top: 5px; bottom: 6px; width: 1px; background: #5a5a5a; }
.tab.current { background: #fff; color: #333; border-radius: 0 0 3px 3px; padding: 0 7px; width: 41px; margin: 0 4px 2px 4px; }
.tab.current::after { left: 4px; right: 4px; width: auto; top: auto; bottom: 2px; height: 2px; background: #2a7d50; }
.tab.after { padding-left: 9px; }
.tab.after, .tab.after ~ .tab { letter-spacing: .2px; }
.tab.after::before { content: ""; position: absolute; left: 0; top: 5px; bottom: 6px; width: 1px; background: #5a5a5a; }
.addtab { margin-left: 27px; width: 14px; font-size: 16px; color: #cfcfcf; text-align: center; font-family: "Liberation Sans", sans-serif; }
.tabdots { margin-left: 305px; width: 14px; color: #cfcfcf; text-align: center; font-size: 12px; margin-right: 8px; }
.hscroll { width: 512px; height: 7px; background: #a6a6a6; border-radius: 4px; flex: none; }

/* status */
.statusbar { height: 16px; flex: none; background: #131313; display: flex; align-items: center; padding-left: 8px; font-size: 9.500px; color: #d0d0d0; }
.st-macro { width: 11px; height: 11px; margin-left: 15px; }
.st-acc { width: 12px; height: 12px; margin-left: 11px; }
.st-text { margin-left: 3px; color: #e6e6e6; }
.st-right { margin-left: auto; display: flex; align-items: center; height: 100%; }
.vb { width: 30px; height: 100%; display: flex; align-items: center; justify-content: center; }
.vb svg { width: 12px; height: 12px; }
.vb.on { background: #2c2c2c; }
.zm { width: 10px; margin-left: 1px; text-align: center; font-size: 12px; font-family: "Liberation Sans", sans-serif; color: #cfcfcf; }
.zm.first { margin-left: 2px; }
.slider { width: 75px; height: 1px; background: #c8c8c8; margin-left: 2px; position: relative; }
.slider i { position: absolute; left: 38px; top: -4px; width: 3px; height: 9px; background: #c8c8c8; }
.zoomval { width: 30px; margin-left: 1px; margin-right: 6px; text-align: right; font-size: 10.500px; }

/* taskbar */
.taskbar { height: 36px; flex: none; display: flex; align-items: center; color: #e4e4e4;
  background: linear-gradient(90deg, #10122e 0, #1b1a48 12%, #2b1c5e 24%, #18215e 31%, #1b1d30 37%, #202025 46%, #1f1f24 70%, #1a2030 85%, #182238 100%); }
.weather { width: 402px; flex: none; display: flex; align-items: center; padding-left: 13px; position: relative; }
.w-ic { width: 22px; height: 22px; }
.w-badge { position: absolute; left: 23px; top: -4px; width: 11px; height: 11px; border-radius: 50%; background: #f37c82; color: #300; font-size: 8px; line-height: 11px; text-align: center; }
.w-text { margin-left: 3px; display: flex; flex-direction: column; font-size: 9px; line-height: 12px; }
.w-sub { color: #b9bcc8; font-size: 9.500px; }
.tk { width: 32.800px; height: 36px; flex: none; display: flex; align-items: center; justify-content: center; position: relative; }
.tk svg { width: 19px; height: 19px; }
.tk.dot::after, .activeapp::after { content: ""; position: absolute; left: 50%; bottom: 2px; width: 4px; height: 2px; margin-left: -2px; border-radius: 1px; background: #9a9a9a; }
.activeapp { background: #2d2d30; border-radius: 4px; height: 34px; }
.activeapp::after { width: 12px; margin-left: -6px; background: #62d5e8; bottom: 1px; }
.big-x { font-size: 9px; }
.talk { font: bold 5px "Liberation Sans", sans-serif; fill: #fae100; text-anchor: middle; }
.tk-search { width: 163px; height: 25px; flex: none; margin: 0 2px 0 2px; background: #3a3a42; border-radius: 13px; display: flex; align-items: center; padding-left: 9px; gap: 8px; color: #b9b9b9; font-size: 11px; }
.tk-search > svg:first-child { width: 12px; height: 12px; }
.tk-art { width: 36px; height: 20px; margin-left: auto; margin-right: 0; }
.tray { margin-left: auto; display: flex; align-items: center; padding-right: 13px; }
.tr-chev { width: 10px; height: 10px; margin-right: 14px; }
.tr-a { font-family: "Liberation Sans", sans-serif; font-size: 17px; color: #dcdcdc; margin-right: 11px; }
.tr-wifi { width: 14px; height: 12px; margin-right: 4px; }
.tr-vol { width: 14px; height: 12px; margin-right: 11px; }
.clock { display: flex; flex-direction: column; align-items: flex-end; font-size: 9px; line-height: 12.500px; color: #e4e4e4; white-space: nowrap; }
.tr-bell { width: 12px; height: 14px; margin-left: 5px; }
.tr-cop { width: 20px; height: 20px; margin-left: 11px; }
.pro { font: bold 4.500px "Liberation Sans", sans-serif; fill: #222; text-anchor: middle; }
```
